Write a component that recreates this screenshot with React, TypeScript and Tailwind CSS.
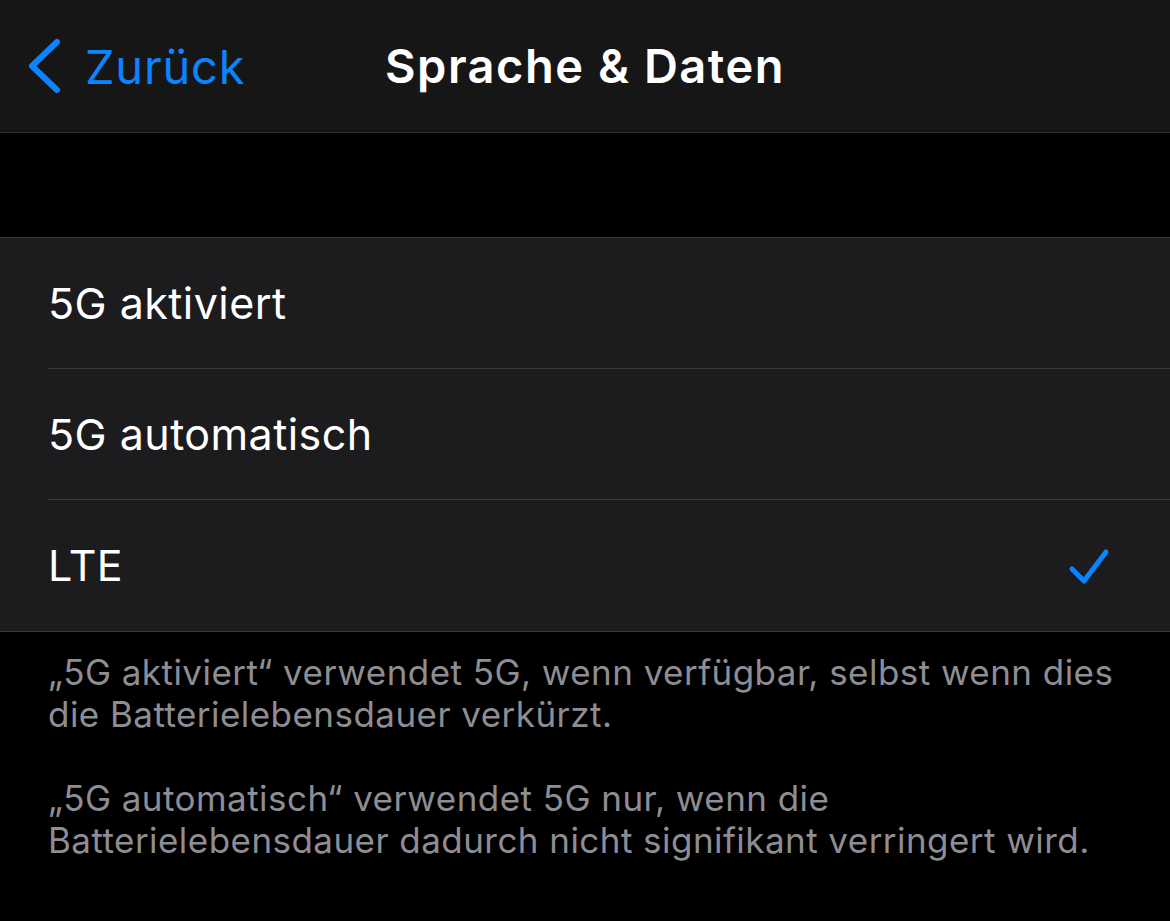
import React from "react";

const font = { fontFamily: "Inter, 'Noto Sans', 'Liberation Sans', sans-serif" };

function Row({ label, checked, last }: { label: string; checked?: boolean; last?: boolean }) {
  return (
    <div className="pl-[48px]">
      <div className={`h-[131px] flex items-center justify-between pr-[58px] ${last ? "" : "border-b border-[#38383a]"}`}>
        <span className="text-[43px] text-white tracking-[0.45px]">{label}</span>
        {checked && (
          <svg width="44" height="40" viewBox="0 0 44 40" className="mt-[2px]">
            <path d="M4 22 L16 34 L38 5" fill="none" stroke="#0a84ff" strokeWidth="5" strokeLinecap="round" strokeLinejoin="round" />
          </svg>
        )}
      </div>
    </div>
  );
}

export default function App() {
  return (
    <div className="w-[1170px] h-[921px] bg-black overflow-hidden" style={font}>
      <div className="h-[133px] bg-[#161616] border-b border-[#2e2e30] relative flex items-center">
        <div className="flex items-center pl-[26px] text-[#0a84ff]">
          <svg width="36" height="56" viewBox="0 0 36 56">
            <path d="M31 4 L6 28 L31 52" fill="none" stroke="#0a84ff" strokeWidth="6" strokeLinecap="round" strokeLinejoin="round" />
          </svg>
          <span className="ml-[23px] text-[47px] leading-none tracking-[0.8px]">Zurück</span>
        </div>
        <div className="absolute left-0 right-0 top-0 h-[132px] flex items-center justify-center pointer-events-none">
          <span className="text-[47px] font-semibold text-white tracking-[1.5px] leading-none -mt-[2px]">Sprache &amp; Daten</span>
        </div>
      </div>
      <div className="h-[104px]" />
      <div className="bg-[#1c1c1e] border-y border-[#38383a]">
        <Row label="5G aktiviert" />
        <Row label="5G automatisch" />
        <Row label="LTE" checked last />
      </div>
      <div className="px-[48px] pt-[19px] text-[#8d8d93] text-[35px] leading-[42px] tracking-[0.45px] whitespace-nowrap">
        <p>„5G aktiviert“ verwendet 5G, wenn verfügbar, selbst wenn dies<br />die Batterielebensdauer verkürzt.</p>
        <p className="mt-[42px]">„5G automatisch“ verwendet 5G nur, wenn die<br />Batterielebensdauer dadurch nicht signifikant verringert wird.</p>
      </div>
    </div>
  );
}
